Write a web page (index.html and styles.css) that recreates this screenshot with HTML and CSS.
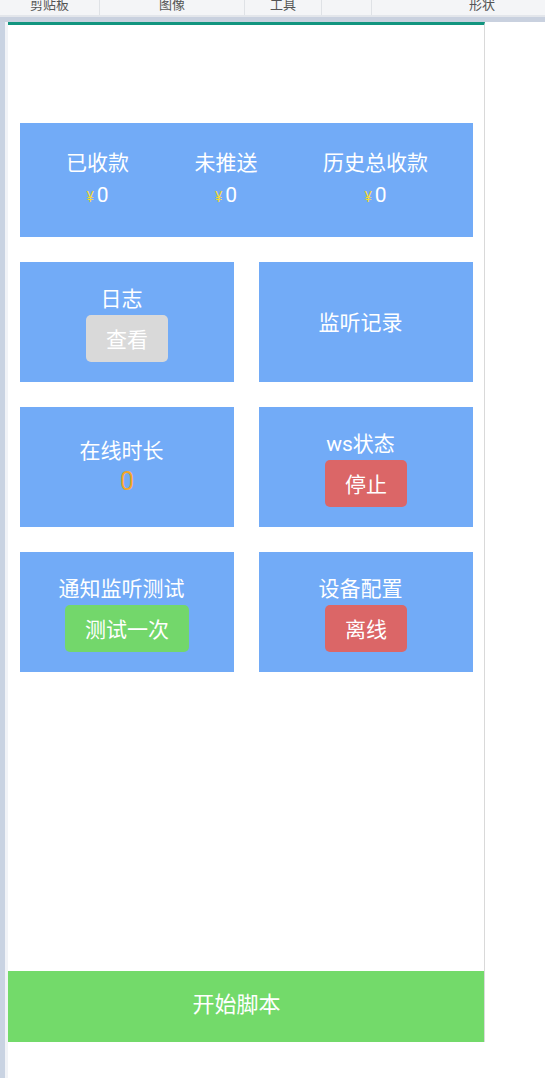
FILE: index.html
```html
<!DOCTYPE html>
<html lang="zh-CN">
<head>
  <meta charset="UTF-8">
  <title>脚本控制台</title>
  <link rel="stylesheet" href="styles.css">
</head>
<body>
  <div class="toolbar">
    <div class="group g1"><span>剪贴板</span></div>
    <div class="group g2"><span>图像</span></div>
    <div class="group g3"><span>工具</span></div>
    <div class="group g4"></div>
    <div class="group g5"><span>形状</span></div>
  </div>
  <div class="band"></div>

  <div class="workspace">
    <div class="strip"></div>
    <div class="gutter"></div>

    <div class="phone">
      <div class="panel">
        <div class="card stats">
          <div class="stat">
            <div class="label">已收款</div>
            <div class="money"><span class="yen">¥</span>0</div>
          </div>
          <div class="stat">
            <div class="label">未推送</div>
            <div class="money"><span class="yen">¥</span>0</div>
          </div>
          <div class="stat">
            <div class="label">历史总收款</div>
            <div class="money"><span class="yen">¥</span>0</div>
          </div>
        </div>

        <div class="grid">
          <div class="card">
            <div class="label">日志</div>
            <button class="btn gray">查看</button>
          </div>
          <div class="card">
            <div class="label">监听记录</div>
          </div>

          <div class="card">
            <div class="label">在线时长</div>
            <div class="uptime">0</div>
          </div>
          <div class="card">
            <div class="label">ws状态</div>
            <button class="btn red">停止</button>
          </div>

          <div class="card">
            <div class="label">通知监听测试</div>
            <button class="btn green">测试一次</button>
          </div>
          <div class="card">
            <div class="label">设备配置</div>
            <button class="btn red">离线</button>
          </div>
        </div>
      </div>

      <button class="start">开始脚本</button>
    </div>
  </div>
</body>
</html>
```

FILE: styles.css
```css
body {
  margin: 0;
  background: #fff;
  font-family: Roboto, "Noto Sans CJK SC", sans-serif;
  overflow: hidden;
}

/* editor chrome around the screenshot */
.toolbar {
  display: flex;
  height: 15px;
  background: #f4f5f7;
  border-bottom: 2px solid #e3e6eb;
  overflow: hidden;
  font-size: 13px;
  color: #555;
}
.group {
  flex: none;
  display: flex;
  justify-content: center;
  border-right: 1px solid #dfe2e6;
}
.group span {
  line-height: 13px;
  margin-top: -2px;
}
.g1 { width: 99px; }
.g2 { width: 144px; }
.g3 { width: 76px; }
.g4 { width: 49px; }
.g5 { width: 220px; border-right: none; }

.band {
  height: 5px;
  background: #c9d1df;
}
.workspace {
  display: flex;
  align-items: flex-start;
  height: 1056px;
}
.strip {
  width: 5px;
  align-self: stretch;
  background: #c9d3e2;
}
.gutter {
  width: 3px;
  align-self: stretch;
  background: #f1f3f7;
}

/* the phone screen */
.phone {
  box-sizing: border-box;
  width: 477px;
  height: 1020px;
  display: flex;
  flex-direction: column;
  border-top: 3px solid #12957f;
  border-right: 1px solid #d9d9d9;
}
.panel {
  flex: 1;
  padding: 98px 11px 0 12px;
}

.card {
  background: #72abf7;
  color: #fff;
  display: flex;
  flex-direction: column;
  align-items: center;
  justify-content: center;
  height: 120px;
}
.label {
  font-size: 21px;
  line-height: 28px;
}
.grid .label {
  padding-right: 11px;
  margin-top: 2px;
}

.stats {
  flex-direction: row;
  justify-content: space-between;
  height: 114px;
  padding: 0 45px 0 46px;
}
.stat {
  display: flex;
  flex-direction: column;
  align-items: center;
}
.money {
  margin-top: 4px;
  font-size: 21px;
  line-height: 28px;
}
.yen {
  font-size: 14px;
  color: #f0d83a;
  margin-right: 3px;
}

.grid {
  display: grid;
  grid-template-columns: 1fr 1fr;
  gap: 25px;
  margin-top: 25px;
}

.btn {
  margin-top: 2px;
  height: 47px;
  padding: 0 20px;
  border: none;
  border-radius: 5px;
  color: #fff;
  font-family: inherit;
  font-size: 21px;
}
.gray { background: #d9d9d9; }
.red { background: #db6667; }
.green { background: #73d76b; }

.uptime {
  font-size: 25px;
  line-height: 34px;
  color: #f4a62a;
}

.start {
  height: 71px;
  border: none;
  padding: 0 19px 10px 0;
  background: #73da6a;
  color: #fff;
  font-family: inherit;
  font-size: 22px;
}
```
